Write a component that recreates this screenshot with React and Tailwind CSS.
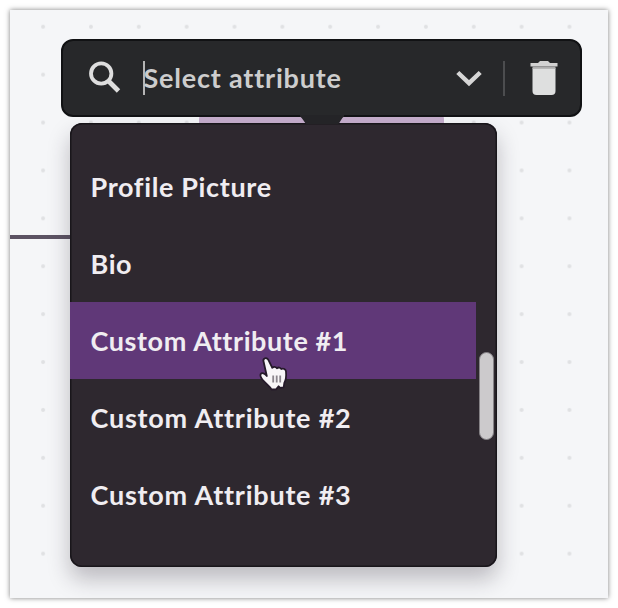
import React from 'react';

const attributes = [
  { label: 'Profile Picture', spacing: 'tracking-[0.65px]' },
  { label: 'Bio', spacing: 'tracking-[0.6px]' },
  { label: 'Custom Attribute #1', spacing: 'tracking-[0.6px]', active: true },
  { label: 'Custom Attribute #2', spacing: 'tracking-[0.78px]' },
  { label: 'Custom Attribute #3', spacing: 'tracking-[0.78px]' },
];

const SearchIcon = () => (
  <svg width="34" height="34" viewBox="0 0 34 34" fill="none" stroke="#dedede" className="shrink-0">
    <circle cx="13.2" cy="12.5" r="10.2" strokeWidth="3.8" />
    <path d="M20.5 20L30.5 30" strokeWidth="4.8" />
  </svg>
);

const ChevronIcon = () => (
  <svg width="28" height="18" viewBox="0 0 28 18" fill="none" stroke="#d6d6d6" strokeWidth="4.4" className="shrink-0">
    <path d="M2.8 3.5L14 14.2L25.2 3.5" />
  </svg>
);

const TrashIcon = () => (
  <svg width="28" height="36" viewBox="0 0 28 36" className="shrink-0">
    <path d="M2.5 8h23v23a4 4 0 0 1-4 4h-15a4 4 0 0 1-4-4z" fill="#dedfdf" />
    <path d="M0.5 3h7.5l2-2h8l2 2h7.5v3.5h-27z" fill="#d2d2d2" />
    <path d="M2.5 6.5h23v2.3h-23z" fill="#adadad" />
  </svg>
);

const HandCursor = () => (
  <svg width="34" height="38" viewBox="0 0 34 38" className="absolute left-[187.5px] top-[53px] z-10">
    <path
      d="M7.5 3.5c1.5-1 3.3 0 4 1.7l3.8 7.6c1.2-1.3 3.4-1.3 4.6.4 1.5-1.2 3.5-.8 4.4.8 2-1 4.5.2 4.7 2.5.4 4.5.5 8-1.7 11.500l-.6 4.300-3.600.600-1.500-1.600-2.500 3-4.600.200c-2-3.800-6.300-6.200-9.200-10-1.300-1.800-2.600-3.800-1.600-5.400 1.200-1.800 4-.7 6.100 1.900L6.600 6.700c-.5-1.300-.2-2.500.9-3.200z"
      fill="#f8f6f8"
      stroke="#251a2a"
      strokeWidth="1.8"
      strokeLinejoin="round"
    />
    <path d="M16.2 20.5v7M19.7 20.5v7M23.2 20.5v7" stroke="#8b858d" strokeWidth="1.8" />
  </svg>
);

const Toolbar = () => (
  <div className="relative z-10 flex items-center w-[521px] h-[78px] rounded-xl bg-[#27282a] border-2 border-[#111214] pl-[25px] pr-[22px]">
    <SearchIcon />
    <div className="flex items-center ml-[21px] w-[313px]">
      <span className="w-[2px] h-[34px] bg-[#b5b5b5] -mr-[2px]" />
      <span className="font-bold text-[27px] leading-none tracking-[0.8px] text-[#cdcdcd] whitespace-nowrap pb-[2px] pl-[0.5px]">Select attribute</span>
    </div>
    <ChevronIcon />
    <span className="w-[2px] h-[35px] bg-[#4c4d4f] ml-[20px] mr-[25px]" />
    <TrashIcon />
    {/* pointer that ties the toolbar to its menu */}
    <svg width="44" height="10" viewBox="0 0 44 10" className="absolute left-[237px] top-[74px]">
      <path d="M0 0h44v1.5c-2.5 1.5-3.5 5-5.5 7.5H6C4 6.5 2.5 3 0 1.5z" fill="#242427" />
    </svg>
  </div>
);

const AttributeMenu = () => (
  <div className="relative w-[427px] h-[444px] ml-[8.5px] mt-[6px] pt-[25px] rounded-xl bg-[#2e282f] shadow-[inset_0_0_0_1.5px_#19161b,0_12px_22px_rgba(40,34,48,0.28)]">
    {attributes.map((attr) => (
      <div
        key={attr.label}
        className={`relative flex items-center h-[77px] w-[406.5px] pl-[21px] ${attr.active ? 'bg-[#603878]' : ''}`}
      >
        <span className={`font-bold text-[27px] leading-none whitespace-nowrap text-[#f0edf1] ${attr.spacing}`}>{attr.label}</span>
        {attr.active && <HandCursor />}
      </div>
    ))}
    <div className="absolute right-[3px] top-[229px] w-[15px] h-[88px] rounded-full bg-[#cccacc] border border-[#858286]" />
  </div>
);

const App = () => {
  return (
    <div className="w-[618px] h-[608px] p-[10px] bg-white overflow-hidden font-['Lato',sans-serif]">
      <div className="relative w-[598px] h-[588px] pl-[51px] pt-[29px] bg-[#f5f6f8] shadow-[0_0_5px_rgba(0,0,0,0.5)]">
        <svg width="598" height="588" className="absolute inset-0">
          <defs>
            <pattern id="dots" x="9.2" y="-7.2" width="47.85" height="47.9" patternUnits="userSpaceOnUse">
              <circle cx="23.9" cy="23.9" r="2" fill="#e0e1e3" />
            </pattern>
          </defs>
          <rect width="598" height="588" fill="url(#dots)" />
        </svg>
        {/* canvas node and its connector behind the menu */}
        <div className="absolute left-0 top-[225px] w-[62px] h-[4px] bg-[#5c5363]" />
        <div className="absolute left-[189px] top-[105px] w-[245px] h-[20px] rounded-t bg-[#c6aecd]" />
        <Toolbar />
        <AttributeMenu />
      </div>
    </div>
  );
};

export default App;
